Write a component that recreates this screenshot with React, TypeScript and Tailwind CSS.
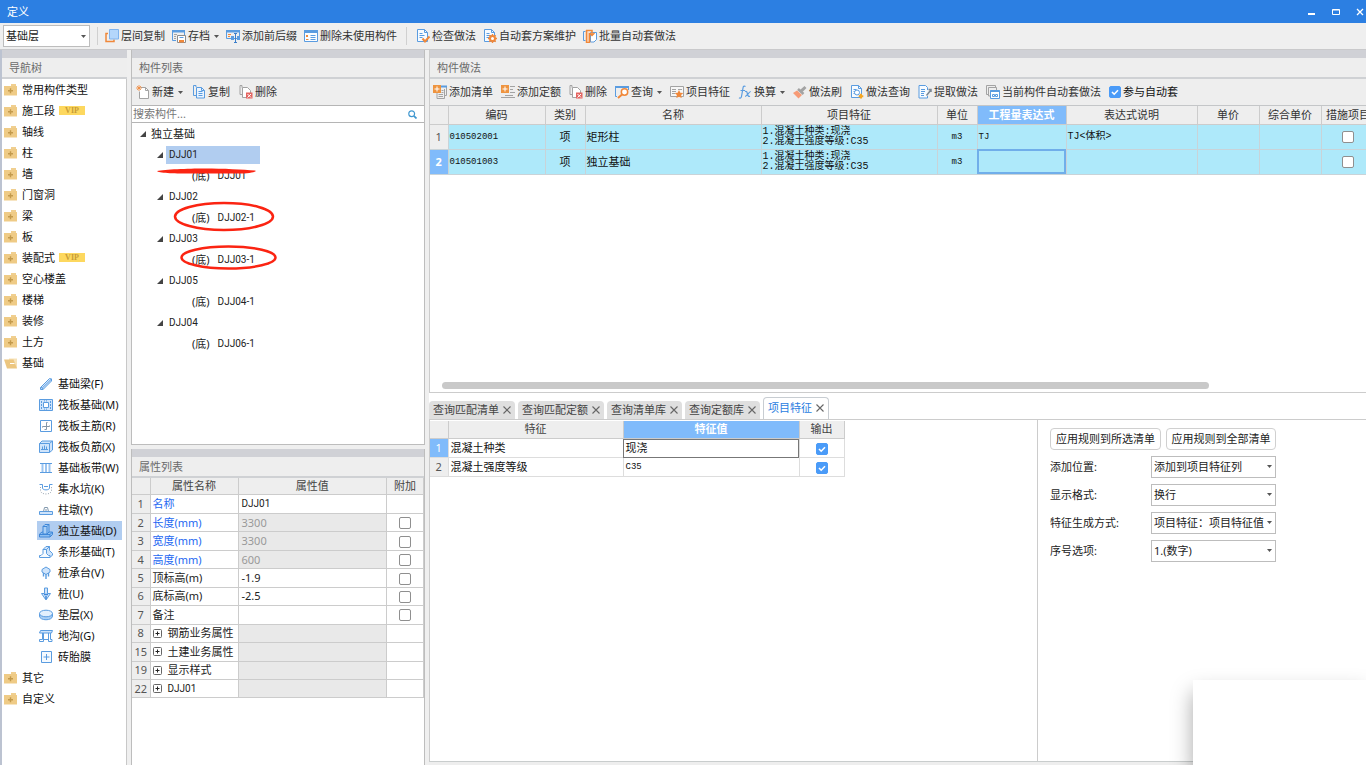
import React from "react";
import clsx from "clsx";

interface NavChild {
  label: string;
  icon: React.ReactNode;
}

interface TreeNode {
  name: string;
  children: string[];
}

interface PropertyRow {
  no: number;
  name: string;
  value?: string;
  blue?: boolean;
  readOnly?: boolean;
  extra?: boolean;
  group?: boolean;
}

const BLUE = "#5a9ce0";
const PALE = "#cfe4fb";
const ORANGE = "#f0883a";
const GRAY = "#a3a3a3";

const Icon = ({
  children,
  size = 14,
}: {
  children: React.ReactNode;
  size?: number;
}) => (
  <svg
    width={size}
    height={size}
    viewBox="0 0 14 14"
    fill="none"
    stroke={BLUE}
    strokeWidth="1"
    className="shrink-0"
    aria-hidden="true"
  >
    {children}
  </svg>
);

const Caret = () => (
  <svg width="5" height="3" viewBox="0 0 5 3" className="shrink-0" aria-hidden="true">
    <path d="M0 0h5L2.500 3z" fill="#555" />
  </svg>
);

/* ---- toolbar icons ---- */

const LayerCopyIcon = () => (
  <Icon>
    <path d="M3 4.500H1v8h8v-2" stroke={ORANGE} strokeWidth="1.500" />
    <path d="M4.500.5h9v9.500h-9z" fill="#b4d6fb" stroke="#7fb3ee" />
  </Icon>
);

const ArchiveIcon = () => (
  <Icon>
    <path d="M4 11.500H.5v-10h12V6" />
    <path d="M0 1h13v2.500H0z" fill={BLUE} stroke="none" />
    <path d="M2 5.500h3M2 7.500h2M2 9.500h2" stroke={GRAY} />
    <path d="M5.500 6.500h8v7h-8z" fill="#fff" stroke="#8c8c8c" />
    <path d="M7 11h5v2.500H7z" fill={ORANGE} stroke="none" />
    <path d="M7.500 8.500h4" />
  </Icon>
);

const PrefixIcon = () => (
  <Icon>
    <path d="M.5 1.500h13v8H.5z" />
    <path d="M0 1h14v2.500H0z" fill={BLUE} stroke="none" />
    <path d="M2 5.500h3M2 7.500h2" stroke={ORANGE} />
    <path d="M5 7h3v4H5zM11 7h3v4h-3z" fill={BLUE} stroke="none" />
    <path d="M9.500 5v8M8 13.500h3M8 4.500h3" stroke="#3c7fcb" />
  </Icon>
);

const UnusedIcon = () => (
  <Icon>
    <path d="M.5 1.500h13v11H.5z" fill="#fbfdff" />
    <path d="M0 1h14v3H0z" fill={BLUE} stroke="none" />
    <path d="M2 6l2 2M4 6L2 8M2 10.500h2.500" stroke={ORANGE} />
    <path d="M6.500 6.500h5M6.500 8.500h5M6.500 10.500h5" />
  </Icon>
);

const Doc = () => (
  <>
    <path d="M1.500.5h7l3 3v9h-10z" fill="#f7fbff" />
    <path d="M8.500.5v3h3M3.500 4.500h3M3.500 6.500h5M3.500 8.500h3" />
  </>
);

const CheckDocIcon = () => (
  <Icon>
    <Doc />
    <path d="M6.500 9.500l2.500 3L13.500 7.500" stroke={ORANGE} strokeWidth="2" />
  </Icon>
);

const GearDocIcon = () => (
  <Icon>
    <Doc />
    <circle cx="9.500" cy="9.500" r="2.500" stroke={ORANGE} strokeWidth="2" fill="#fff" />
    <path
      d="M9.500 5v2M9.500 12v2M5 9.500h2M12 9.500h2M6.300 6.300l1.200 1.200M12.700 6.300l-1.200 1.200M6.300 12.700l1.200-1.200M12.700 12.700l-1.200-1.200"
      stroke={ORANGE}
      strokeWidth="1.400"
    />
  </Icon>
);

const BatchIcon = () => (
  <Icon>
    <path d="M2.500 2.500h-2v9h2" />
    <path d="M7.500 3.500h6v7l-2.500 2.500H7.500z" fill="#fff" />
    <path d="M3.500 1v12.500h3V4" fill="#fbd9c0" stroke={ORANGE} strokeWidth="1.500" />
    <path d="M3 1.500h6v4M6.500 4L9 6.500 11.500 4" stroke={ORANGE} strokeWidth="1.500" />
  </Icon>
);

const NewIcon = () => (
  <Icon>
    <path d="M4.500 2.500h5l3 3v8h-9v-7" fill="#fff" stroke={GRAY} />
    <path d="M9.500 2.500v3h3" stroke={GRAY} />
    <path d="M3 0v6M0 3h6M1 1l4 4M5 1L1 5" stroke={ORANGE} strokeWidth=".8" />
  </Icon>
);

const CopyIcon = () => (
  <Icon>
    <path d="M4 2V.5H1.500v10H4" />
    <path d="M4.500 2.500h5l3 3v7.500h-8z" fill="#eaf4ff" />
    <path d="M9.500 2.500v3h3M6.500 6.500h4M6.500 8.500h4M6.500 10.500h4" />
  </Icon>
);

const DeleteIcon = () => (
  <Icon>
    <path d="M3 2.500V.5H1v9h2" stroke={GRAY} />
    <path d="M3.500 2.500h5l3 3v7h-8z" fill="#fff" stroke={GRAY} />
    <path d="M7 7.500h6.500v6H7z" fill="#e46561" stroke="none" />
    <path d="M8.500 9l3.500 3.500M12 9l-3.500 3.500" stroke="#fff" />
  </Icon>
);

const AddListIcon = () => (
  <Icon>
    <path d="M8 1.500h5.500v9H12M4 8v5.500h7.500V4" stroke={GRAY} />
    <path d="M8 1.500h6" strokeWidth="2" />
    <path d="M8.500 5.500h2M8.500 7.500h2M5.500 9.500h4.500M5.500 11.500h4.500" stroke={GRAY} />
    <path d="M0 0h8v8H0z" fill="#ee9440" stroke="none" />
    <path d="M4 1.500v5M1.500 4h5" stroke="#fff" />
  </Icon>
);

const AddQuotaIcon = () => (
  <Icon>
    <path d="M9 1.500h5M9 4.500h3M9 7.500h5M4 10.500h8M0 12.500h14" stroke={GRAY} />
    <path d="M0 0h8v8H0z" fill="#ee9440" stroke="none" />
    <path d="M4 1.500v5M1.500 4h5" stroke="#fff" />
  </Icon>
);

const QueryIcon = () => (
  <Icon>
    <path d="M2 11.500H.5v-10h13V5" />
    <path d="M0 1h14v2H0z" fill={BLUE} stroke="none" />
    <circle cx="9.500" cy="7" r="3.200" fill="#fff" stroke={ORANGE} strokeWidth="1.500" />
    <path d="M7 9.500L3 13" stroke={ORANGE} strokeWidth="2" />
  </Icon>
);

const FeatureIcon = () => (
  <Icon>
    <path d="M.5 1.500h13v10H.5z" fill="#f7f7f7" stroke={GRAY} />
    <path d="M2 4.500h4M2 6.500h4M2 8.500h3M8 4.500h4" stroke={GRAY} />
    <path
      d="M9 5l1.300 2.700 3 .4-2.200 2 .6 3L9 11.700l-2.700 1.400.6-3-2.200-2 3-.4z"
      fill={ORANGE}
      stroke="none"
    />
  </Icon>
);

const FxIcon = () => (
  <Icon>
    <path d="M7.500 1.500C6 .5 5.200 1.500 5 3L3.500 11.500C3.200 13 2 13.500 1 12.800M2.500 5.500H7" strokeWidth="1.200" />
    <path d="M7 6.500c1.500-.8 2 .5 2.500 2.500s1 3 2.500 2.200M12.800 6.500C11 6.500 9 11.500 7 11.500" strokeWidth="1.200" />
  </Icon>
);

const BrushIcon = () => (
  <Icon>
    <path d="M11.500 1l2 2-4 4-2.500-2z" fill={GRAY} stroke="none" />
    <path d="M5 4l5.500 5" stroke={GRAY} strokeWidth="2.500" />
    <path d="M4 5.500L9 10l-3.500 3.500L0 8z" fill="#f79b76" stroke="none" />
  </Icon>
);

const SearchDocIcon = () => (
  <Icon>
    <Doc />
    <circle cx="7" cy="7.500" r="2.500" fill="#fff" />
    <path d="M8.800 9.500l2 2" />
    <path d="M11 8.800v4.700M8.700 11.200h4.600" stroke="#f5a623" strokeWidth="2" />
  </Icon>
);

const ExtractIcon = () => (
  <Icon>
    <path d="M9.500 11v2H1V.5h6.500l2 2V5" fill="#f7fbff" />
    <path d="M3 4.500h4M3 6.500h4M3 8.500h3M3 10.500h3" />
    <path d="M12.500 5.500L8.500 10.500M10.500 4.500H13V7" stroke="#7d8893" strokeWidth="1.500" />
  </Icon>
);

const CurrentIcon = () => (
  <Icon>
    <path d="M2 9.500H.5V.5h9V2M4 11H2.500V2.500h8V5" stroke={GRAY} />
    <path d="M4.500 5.500h9v8h-9z" fill="#fff" />
    <path d="M4.500 6h9" strokeWidth="2" />
    <path d="M6.500 9.500h2v2h-2zM9.500 9.500h2v2h-2z" />
  </Icon>
);

/* ---- navigation icons ---- */

const FolderIcon = () => (
  <svg width="14" height="12" viewBox="0 0 14 12" className="shrink-0" aria-hidden="true">
    <path d="M7 0h5v2H7z" fill="#f0cf90" />
    <path d="M0 2h13v9.500H0z" fill="#efcb86" />
    <path d="M6.500 4.200v5M4 6.700h5" stroke="#c39a4c" strokeWidth="1.400" />
  </svg>
);

const FolderOpenIcon = () => (
  <svg width="14" height="12" viewBox="0 0 14 12" className="shrink-0" aria-hidden="true">
    <path d="M5 1.500h8V11H5z" fill="#f6e2b8" />
    <path d="M0 2.500h9.500L13 11.500H3z" fill="#ecc680" />
    <path d="M6 6.500h4.500" stroke="#fff" />
  </svg>
);

const folders: { label: string; vip?: boolean }[] = [
  { label: "常用构件类型" },
  { label: "施工段", vip: true },
  { label: "轴线" },
  { label: "柱" },
  { label: "墙" },
  { label: "门窗洞" },
  { label: "梁" },
  { label: "板" },
  { label: "装配式", vip: true },
  { label: "空心楼盖" },
  { label: "楼梯" },
  { label: "装修" },
  { label: "土方" },
];

const foundationItems: NavChild[] = [
  {
    label: "基础梁(F)",
    icon: (
      <>
        <path d="M1.500 10.500L10.500 1.500l2 .5v2L4 12.500H1.500z" fill={PALE} />
        <path d="M1.500 10.500l2 .3.5 1.700M3.500 10.800l9-8.800" />
      </>
    ),
  },
  {
    label: "筏板基础(M)",
    icon: (
      <>
        <path d="M.5 1.500h13v11H.5z" fill={PALE} />
        <path d="M4.500 4.500h5v5h-5z" fill="#fff" />
        <path d="M2.500 3v8M11.500 3v8" strokeDasharray="2 1" />
        <path d="M5 2.900h4M5 11.100h4" strokeDasharray="1 1" />
      </>
    ),
  },
  {
    label: "筏板主筋(R)",
    icon: (
      <>
        <path d="M1.500 1.500h11v11h-11z" />
        <path d="M7.500 3.500v7h-2M3.500 8.500v-1h7v-1M7.500 3.500h1" stroke="#8496a8" />
      </>
    ),
  },
  {
    label: "筏板负筋(X)",
    icon: (
      <>
        <path d="M.5 3.500h10v9H.5zM.5 3.500l2.500-2.500h10.500v9l-3 2.500M10.500 3.500l3-2.500" fill={PALE} />
        <path d="M3.500 10V6.500M5.500 10V5.500M7.500 10V6.500M2 9.500h7" />
      </>
    ),
  },
  {
    label: "基础板带(W)",
    icon: (
      <>
        <path d="M1 2.500h12M1 11.500h12" />
        <path d="M3.500 3v8M7 3v8M10.500 3v8" strokeWidth="2" stroke="#9cc5f1" />
      </>
    ),
  },
  {
    label: "集水坑(K)",
    icon: (
      <>
        <path d="M.5 2.500h3V6c0 2.500 7 2.500 7 0V2.500h3" />
        <path d="M1.500 5v4c1 4 10 4 11 0V5" strokeDasharray="1 1.500" stroke="#99a5b0" />
        <path d="M5 4.500h4" />
      </>
    ),
  },
  {
    label: "柱墩(Y)",
    icon: (
      <>
        <path d="M.5 8.500h13v3H.5z" fill={PALE} />
        <path d="M4.500 8.500l1-4h3l1 4M7 6v2" stroke="#8298ad" />
      </>
    ),
  },
  {
    label: "独立基础(D)",
    icon: (
      <>
        <path d="M.5 10l2.500-2h10.500v2.500l-2.500 2.500H.5z" fill="#8fc0f2" stroke="#3f87d8" />
        <path d="M4 10V2.500L6 .5h4V8l-2 2z" fill="#a9cff6" stroke="#3f87d8" />
        <path d="M4 2.500h4V10M8 2.500L10 .5M.5 10.500h10.500l2.500-2.500M11 10.500V13" stroke="#3f87d8" />
      </>
    ),
  },
  {
    label: "条形基础(T)",
    icon: (
      <>
        <path d="M4 4.500L7 1.500h3.500v4l3 3v1.500l-2.500 2.500" fill={PALE} />
        <path d="M.5 12.500v-2h1.500l2-2v-4h3.500v4l2 2H11v2z" fill="#f5faff" />
        <path d="M7.500 4.500l3-3" />
      </>
    ),
  },
  {
    label: "桩承台(V)",
    icon: (
      <>
        <path d="M4.500 7v3.500M7 8v5M9.500 7v3.500" strokeWidth="1.400" />
        <path d="M3 3.500L7 1l4 2.500V6L7 8.500 3 6z" fill={PALE} />
      </>
    ),
  },
  {
    label: "桩(U)",
    icon: (
      <>
        <path d="M5.500 1h3v5.500h3L7 13 2.500 6.500h3z" fill={PALE} />
        <path d="M5 7.500h4M7 9v3" strokeWidth="1.500" stroke="#3f87d8" />
      </>
    ),
  },
  {
    label: "垫层(X)",
    icon: (
      <>
        <path d="M.5 5.500V8c0 5 13 5 13 0V5.500" fill="#a9cff6" />
        <ellipse cx="7" cy="5.500" rx="6.500" ry="3.300" fill="#e2effd" />
      </>
    ),
  },
  {
    label: "地沟(G)",
    icon: (
      <>
        <path d="M1.500 1.500h12l-1 2.500H.5z" fill={PALE} />
        <path d="M3.500 4v6.500h-3v2h4V4M9.500 4v8.500h3.500v-2h-1.500V4M4.500 10.500h5" />
      </>
    ),
  },
  {
    label: "砖胎膜",
    icon: (
      <>
        <path d="M2.500 1.500h10v11h-10z" fill="#f5faff" />
        <path d="M7.500 4v6M4.500 7h6" />
      </>
    ),
  },
];

const tree: TreeNode[] = [
  { name: "DJJ01", children: ["DJJ01"] },
  { name: "DJJ02", children: ["DJJ02-1"] },
  { name: "DJJ03", children: ["DJJ03-1"] },
  { name: "DJJ05", children: ["DJJ04-1"] },
  { name: "DJJ04", children: ["DJJ06-1"] },
];

const properties: PropertyRow[] = [
  { no: 1, name: "名称", value: "DJJ01", blue: true },
  { no: 2, name: "长度(mm)", value: "3300", blue: true, readOnly: true, extra: true },
  { no: 3, name: "宽度(mm)", value: "3300", blue: true, readOnly: true, extra: true },
  { no: 4, name: "高度(mm)", value: "600", blue: true, readOnly: true, extra: true },
  { no: 5, name: "顶标高(m)", value: "-1.9", extra: true },
  { no: 6, name: "底标高(m)", value: "-2.5", extra: true },
  { no: 7, name: "备注", extra: true },
  { no: 8, name: "钢筋业务属性", group: true, readOnly: true },
  { no: 15, name: "土建业务属性", group: true, readOnly: true },
  { no: 19, name: "显示样式", group: true, readOnly: true },
  { no: 22, name: "DJJ01", group: true, readOnly: true },
];

const methodRows = [
  { code: "010502001", name: "矩形柱", features: ["1.混凝土种类:现浇", "2.混凝土强度等级:C35"], expr: "TJ", note: "TJ<体积>" },
  { code: "010501003", name: "独立基础", features: ["1.混凝土种类:现浇", "2.混凝土强度等级:C35"], expr: "", note: "" },
];

const methodColumns = [
  { title: "编码", width: "w-[97px]" },
  { title: "类别", width: "w-[40px]" },
  { title: "名称", width: "w-[176px]" },
  { title: "项目特征", width: "w-[176px]" },
  { title: "单位", width: "w-[40px]" },
  { title: "工程量表达式", width: "w-[89px]", active: true },
  { title: "表达式说明", width: "w-[131px]" },
  { title: "单价", width: "w-[62px]" },
  { title: "综合单价", width: "w-[62px]" },
  { title: "措施项目", width: "w-[54px]" },
];

const tabs = ["查询匹配清单", "查询匹配定额", "查询清单库", "查询定额库", "项目特征"];

const options = [
  { id: "position", label: "添加位置:", value: "添加到项目特征列" },
  { id: "format", label: "显示格式:", value: "换行" },
  { id: "mode", label: "特征生成方式:", value: "项目特征：项目特征值" },
  { id: "order", label: "序号选项:", value: "1.(数字)" },
];

const ToolButton = ({
  icon,
  label,
  menu,
}: {
  icon: React.ReactNode;
  label: string;
  menu?: boolean;
}) => (
  <button type="button" className="flex shrink-0 items-center gap-0.5 whitespace-nowrap text-[#333]">
    {icon}
    <span>{label}</span>
    {menu && (
      <span className="pl-0.5">
        <Caret />
      </span>
    )}
  </button>
);

const Check = ({
  label,
  id,
  checked = false,
}: {
  label?: string;
  id?: string;
  checked?: boolean;
}) => (
  <span className="inline-grid align-middle">
    <input
      id={id}
      type="checkbox"
      aria-label={label}
      defaultChecked={checked}
      className="peer col-start-1 row-start-1 size-3 appearance-none rounded-[2px] border border-[#8f8f8f] bg-white checked:border-[#4a9bf8] checked:bg-[#4a9bf8]"
    />
    <svg
      viewBox="0 0 12 12"
      className="pointer-events-none invisible col-start-1 row-start-1 size-3 peer-checked:visible"
      fill="none"
      stroke="#fff"
      strokeWidth="1.600"
      aria-hidden="true"
    >
      <path d="M3 6l2.200 2.200L9 4.300" />
    </svg>
  </span>
);

const Dropdown = ({
  id,
  label,
  value,
}: {
  id: string;
  label?: string;
  value: string;
}) => (
  <span className="grid h-[22px] w-full items-center">
    <select
      id={id}
      aria-label={label}
      defaultValue={value}
      className="col-start-1 row-start-1 h-full w-full appearance-none border border-[#bdbdbd] bg-white pl-0.5 pr-2 text-[#222]"
    >
      <option>{value}</option>
    </select>
    <span className="pointer-events-none col-start-1 row-start-1 mr-1 justify-self-end">
      <Caret />
    </span>
  </span>
);

const PanelHeader = ({ title }: { title: string }) => (
  <div className="shrink-0">
    <div className="h-2 bg-[#d0d1d6]" />
    <h2 className="flex h-[21px] items-center border-b-2 border-[#cfd1d4] bg-[#eee] px-[7px] text-[#6b6b6b]">
      {title}
    </h2>
  </div>
);

const Navigator = () => (
  <nav className="flex w-[127px] shrink-0 flex-col border-l-2 border-[#bcc3d1] bg-white">
    <PanelHeader title="导航树" />
    <ul className="min-h-0 flex-1 overflow-hidden border-r border-[#c8c8c8] text-[#111]">
      {folders.map((folder) => (
        <li key={folder.label} className="flex h-[21px] items-center gap-1 pl-0.5">
          <FolderIcon />
          <span>{folder.label}</span>
          {folder.vip && (
            <span className="flex h-[9px] w-[26px] items-center justify-center bg-[#fdd85f] font-['Liberation_Serif',serif] text-[8px] font-bold text-[#c79c38]">
              VIP
            </span>
          )}
        </li>
      ))}
      <li>
        <div className="flex h-[21px] items-center gap-1 pl-0.5">
          <FolderOpenIcon />
          <span>基础</span>
        </div>
        <ul className="pl-[35px]">
          {foundationItems.map((item) => (
            <li key={item.label} className="flex h-[21px] items-center">
              <a
                href="#"
                className={clsx(
                  "flex h-[19px] w-[85px] items-center gap-[5px] whitespace-nowrap pl-0.5",
                  item.label === "独立基础(D)" && "bg-[#b1cdf0]"
                )}
              >
                <Icon>{item.icon}</Icon>
                {item.label}
              </a>
            </li>
          ))}
        </ul>
      </li>
      {["其它", "自定义"].map((label) => (
        <li key={label} className="flex h-[21px] items-center gap-1 pl-0.5">
          <FolderIcon />
          <span>{label}</span>
        </li>
      ))}
    </ul>
  </nav>
);

const Expander = () => (
  <svg width="6" height="6" viewBox="0 0 6 6" className="shrink-0" aria-hidden="true">
    <path d="M6 0v6H0z" fill="#444" />
  </svg>
);

const ComponentList = () => (
  <section className="flex min-h-0 flex-[395] flex-col border border-t-0 border-[#bdbdbd] bg-white">
    <PanelHeader title="构件列表" />
    <div className="flex h-[26px] shrink-0 items-center gap-[9px] bg-[#eee] px-1">
      <ToolButton icon={<NewIcon />} label="新建" menu />
      <ToolButton icon={<CopyIcon />} label="复制" />
      <ToolButton icon={<DeleteIcon />} label="删除" />
    </div>
    <label className="flex h-[18px] shrink-0 items-center border-y border-[#b5b5b5] pl-px pr-[7px]">
      <input
        type="text"
        aria-label="搜索构件"
        placeholder="搜索构件..."
        className="min-w-0 flex-1 outline-none placeholder:text-[#777]"
      />
      <svg width="9" height="9" viewBox="0 0 9 9" fill="none" stroke="#3f97cf" aria-hidden="true">
        <circle cx="3.700" cy="3.700" r="2.900" strokeWidth="1.200" />
        <path d="M5.800 5.800l2.700 2.700" strokeWidth="1.700" />
      </svg>
    </label>
    <div className="relative min-h-0 flex-1 overflow-hidden text-[#222]">
      <div className="flex h-[21px] items-center gap-[5px] pl-2">
        <Expander />
        <span>独立基础</span>
      </div>
      {tree.map((node, index) => (
        <div key={node.name}>
          <div className="flex h-[21px] items-center gap-[3px] pl-[25px]">
            <Expander />
            <span
              className={clsx(
                "flex h-[18px] w-[94px] items-center pl-[3px] font-['Roboto',sans-serif] text-[10px]",
                index === 0 && "bg-[#b1cdf0]"
              )}
            >
              {node.name}
            </span>
          </div>
          {node.children.map((child) => (
            <div key={child} className="flex h-[21px] items-center gap-2 pl-[60px]">
              <span>(底)</span>
              <span className="font-['Roboto',sans-serif] text-[10px]">{child}</span>
            </div>
          ))}
        </div>
      ))}
      {/* hand-drawn marks over the tree */}
      <svg
        width="160"
        height="160"
        viewBox="0 0 160 160"
        fill="none"
        stroke="#fb2412"
        strokeWidth="2.500"
        className="pointer-events-none absolute left-0 top-0"
        aria-hidden="true"
      >
        <path
          d="M25 48c8-1.500 30-2.500 48-2.500s38 1 50 2c3 1-4 3-14 3H56c-14 0-30-.5-31-2.500z"
          fill="#fb2412"
          stroke="none"
        />
        <ellipse cx="92" cy="93.500" rx="49" ry="13.500" />
        <ellipse cx="96.500" cy="134.500" rx="47" ry="11" />
      </svg>
    </div>
  </section>
);

const PropertyList = () => (
  <section className="mt-1 flex min-h-0 flex-[316] flex-col border-x border-[#bdbdbd] bg-white">
    <PanelHeader title="属性列表" />
    <table className="h-[220px] w-full table-fixed border-collapse text-left">
      <thead>
        <tr className="bg-[#eee] text-[#444]">
          <th aria-label="行号" className="w-[18px] border-b border-r border-[#ccc]" />
          <th className="w-[88px] border-b border-r border-[#ccc] text-center font-normal">属性名称</th>
          <th className="border-b border-r border-[#ccc] text-center font-normal">属性值</th>
          <th className="w-[37px] border-b border-r border-[#ccc] text-center font-normal">附加</th>
        </tr>
      </thead>
      <tbody>
        {properties.map((row) => (
          <tr key={row.no}>
            <td className="border-b border-r border-[#ccc] bg-[#eee] text-center leading-4 text-[#555]">
              {row.no}
            </td>
            <td
              className={clsx(
                "whitespace-nowrap border-b border-r border-[#ccc] pl-0.5 leading-4",
                row.blue ? "text-[#2468f2]" : "text-[#222]"
              )}
            >
              <span className="flex items-center gap-1.5">
                {row.group && (
                  <svg width="9" height="9" viewBox="0 0 9 9" fill="none" stroke="#666" aria-hidden="true">
                    <rect x=".5" y=".5" width="8" height="8" rx="1" />
                    <path d="M4.500 2.500v4M2.500 4.500h4" stroke="#222" />
                  </svg>
                )}
                {row.name.startsWith("DJJ") ? (
                  <span className="font-['Roboto',sans-serif] text-[10px]">{row.name}</span>
                ) : (
                  row.name
                )}
              </span>
            </td>
            <td
              className={clsx(
                "border-b border-r border-[#ccc] pl-[3px] leading-4",
                row.readOnly ? "bg-[#e9e9e9] text-[#999]" : "text-[#222]",
                row.no === 1 && "font-['Roboto',sans-serif] text-[10px]"
              )}
            >
              {row.value}
            </td>
            <td className="border-b border-r border-[#ccc] text-center leading-3">
              {row.extra && <Check label={row.name} />}
            </td>
          </tr>
        ))}
      </tbody>
    </table>
  </section>
);

const MethodTable = () => (
  <div className="min-h-0 flex-1 overflow-hidden bg-white">
    <table className="w-[945px] table-fixed border-collapse">
      <thead>
        <tr className="h-[18px] bg-[#eee] text-[#333]">
          <th aria-label="行号" className="w-[18px] border-b border-r border-[#ccc]" />
          {methodColumns.map((column) => (
            <th
              key={column.title}
              className={clsx(
                "whitespace-nowrap border-b border-r border-[#ccc] leading-4",
                column.width,
                column.active ? "bg-[#80bbfb] font-bold text-white" : "font-normal"
              )}
            >
              {column.title}
            </th>
          ))}
        </tr>
      </thead>
      <tbody>
        {methodRows.map((row, index) => (
          <tr
            key={row.code}
            className="h-[25px] bg-[#aee9fa] text-[#111] *:border-b *:border-r *:border-[#c9d3d8]"
          >
            <td
              className={clsx(
                "text-center",
                index === 1 ? "bg-[#80bbfb] font-bold text-white" : "bg-[#eee] text-[#555]"
              )}
            >
              {index + 1}
            </td>
            <td className="pl-px font-['Liberation_Mono','Noto_Sans_CJK_SC',monospace] text-[9px]">{row.code}</td>
            <td className="text-center">项</td>
            <td className="pl-px">{row.name}</td>
            <td className="pl-px pt-px font-['Liberation_Mono','Noto_Sans_CJK_SC',monospace] text-[10px] leading-[10px]">
              {row.features.map((feature) => (
                <div key={feature} className="whitespace-nowrap">
                  {feature}
                </div>
              ))}
            </td>
            <td className="text-center font-['Liberation_Mono',monospace] text-[9px]">m3</td>
            <td
              className={clsx(
                "pl-px font-['Liberation_Mono',monospace] text-[9px]",
                index === 1 && "outline-2 -outline-offset-2 outline-[#70aeea]"
              )}
            >
              {row.expr}
            </td>
            <td className="pl-px font-['Liberation_Mono','Noto_Sans_CJK_SC',monospace] text-[10px]">{row.note}</td>
            <td />
            <td />
            <td className="text-center leading-3">
              <Check label={`措施项目 ${index + 1}`} />
            </td>
          </tr>
        ))}
      </tbody>
    </table>
  </div>
);

const MethodPanel = () => (
  <section className="flex min-h-0 flex-[342] flex-col border-b border-l border-[#ccc] bg-white">
    <PanelHeader title="构件做法" />
    <div className="flex h-[27px] shrink-0 items-center gap-2 overflow-hidden border-b border-[#c4c6c8] bg-[#eee] pl-[3px]">
      <ToolButton icon={<AddListIcon />} label="添加清单" />
      <ToolButton icon={<AddQuotaIcon />} label="添加定额" />
      <ToolButton icon={<DeleteIcon />} label="删除" />
      <ToolButton icon={<QueryIcon />} label="查询" menu />
      <ToolButton icon={<FeatureIcon />} label="项目特征" />
      <ToolButton icon={<FxIcon />} label="换算" menu />
      <ToolButton icon={<BrushIcon />} label="做法刷" />
      <ToolButton icon={<SearchDocIcon />} label="做法查询" />
      <ToolButton icon={<ExtractIcon />} label="提取做法" />
      <ToolButton icon={<CurrentIcon />} label="当前构件自动套做法" />
      <span className="flex shrink-0 items-center gap-0.5">
        <Check id="auto-apply" checked />
        <label htmlFor="auto-apply" className="text-[#111]">
          参与自动套
        </label>
      </span>
    </div>
    <MethodTable />
    <div className="shrink-0 pb-[3px] pl-3">
      <div className="h-[7px] w-[83%] rounded-full bg-[#c9c9c9]" />
    </div>
  </section>
);

const FeatureTable = () => (
  <table className="w-[414px] table-fixed border-collapse text-left">
    <thead>
      <tr className="h-[18px] text-[#444]">
        <th aria-label="行号" className="w-[18px] border-b border-r border-[#ccc] bg-[#eee]" />
        <th className="w-[175px] border-b border-r border-[#ccc] bg-[#eee] text-center font-normal leading-4">特征</th>
        <th className="w-[176px] border-b border-r border-[#ccc] bg-[#80bbfb] text-center font-bold leading-4 text-white">
          特征值
        </th>
        <th className="w-[45px] border-b border-r border-[#ccc] bg-[#eee] text-center font-normal leading-4">输出</th>
      </tr>
    </thead>
    <tbody>
      {[
        ["混凝土种类", "现浇"],
        ["混凝土强度等级", "C35"],
      ].map(([name, value], index) => (
        <tr key={name} className="h-[19px] text-[#111] *:border-b *:border-r *:border-[#ddd]">
          <td
            className={clsx(
              "text-center",
              index === 0 ? "bg-[#80bbfb] text-white" : "bg-[#eee] text-[#555]"
            )}
          >
            {index + 1}
          </td>
          <td className="pl-0.5 leading-4">{name}</td>
          <td
            className={clsx(
              "pl-0.5 leading-4",
              index === 0
                ? "outline -outline-offset-1 outline-[#777]"
                : "font-['Liberation_Mono',monospace] text-[9px]"
            )}
          >
            {value}
          </td>
          <td className="text-center leading-3">
            <Check label={`输出 ${name}`} checked />
          </td>
        </tr>
      ))}
    </tbody>
  </table>
);

const QueryPanel = () => (
  <section className="flex min-h-0 flex-[373] flex-col bg-white">
    <div className="flex h-[27px] shrink-0 items-end gap-[3px] border-b border-[#ccc]">
      {tabs.map((tab) => {
        const active = tab === "项目特征";
        return (
          <button
            key={tab}
            type="button"
            className={clsx(
              "flex items-center gap-1 whitespace-nowrap rounded-t-sm px-1",
              active
                ? "h-[22px] border border-b-0 border-[#c8cdd2] bg-white text-[#2b7de1]"
                : "h-[18px] bg-[#dfdfdf] text-[#444]"
            )}
          >
            {tab}
            <svg width="8" height="8" viewBox="0 0 8 8" stroke="#666" strokeWidth="1.100" aria-hidden="true">
              <path d="M.5.5l7 7M7.500.5l-7 7" />
            </svg>
          </button>
        );
      })}
    </div>
    <div className="flex min-h-0 flex-1 border-b border-[#c9cdcd]">
      <div className="min-w-0 flex-1 overflow-hidden border-x border-[#ccc] pt-px">
        <FeatureTable />
      </div>
      <form className="w-[328px] shrink-0 px-3 pt-2">
        <div className="flex gap-[5px]">
          <button type="button" className="h-[22px] w-[111px] whitespace-nowrap rounded-sm border border-[#d0d0d0] text-[#222]">
            应用规则到所选清单
          </button>
          <button type="button" className="h-[22px] w-[110px] whitespace-nowrap rounded-sm border border-[#d0d0d0] text-[#222]">
            应用规则到全部清单
          </button>
        </div>
        <div className="flex w-[226px] flex-col gap-1.5 pt-1.5">
          {options.map((option) => (
            <div key={option.id} className="flex items-center">
              <label htmlFor={option.id} className="w-[101px] shrink-0 text-[#222]">
                {option.label}
              </label>
              <Dropdown id={option.id} value={option.value} />
            </div>
          ))}
        </div>
      </form>
    </div>
    <div className="h-[3px] shrink-0 bg-[#eee]" />
  </section>
);

const App: React.FC = () => {
  return (
    <div className="relative flex h-screen flex-col overflow-hidden bg-[#efefef] font-['Noto_Sans','Noto_Sans_CJK_SC',sans-serif] text-[11px] leading-4">
      <header className="flex h-[23px] shrink-0 items-center justify-between bg-[#2c7fe2] pl-[7px] text-white">
        <h1>定义</h1>
        <div className="flex items-center gap-4 pr-0.5">
          <button type="button" aria-label="最小化">
            <svg width="9" height="9" viewBox="0 0 9 9" stroke="#fff" strokeWidth="2" aria-hidden="true">
              <path d="M1 7h7" />
            </svg>
          </button>
          <button type="button" aria-label="最大化">
            <svg width="8" height="8" viewBox="0 0 8 8" fill="none" stroke="#fff" aria-hidden="true">
              <path d="M.5 1.500h7v5h-7zM.5 2h7" />
            </svg>
          </button>
          <button type="button" aria-label="关闭">
            <svg width="8" height="8" viewBox="0 0 8 8" stroke="#fff" strokeWidth="1.300" aria-hidden="true">
              <path d="M1 1l6 6M7 1L1 7" />
            </svg>
          </button>
        </div>
      </header>

      <div className="flex h-[27px] shrink-0 items-center gap-[7px] border-b border-[#c9c9cb] pl-[3px]">
        <div className="w-[87px] shrink-0">
          <Dropdown id="floor" label="楼层" value="基础层" />
        </div>
        <div className="h-[18px] w-px bg-[#d0d0d0]" />
        <ToolButton icon={<LayerCopyIcon />} label="层间复制" />
        <ToolButton icon={<ArchiveIcon />} label="存档" menu />
        <ToolButton icon={<PrefixIcon />} label="添加前后缀" />
        <ToolButton icon={<UnusedIcon />} label="删除未使用构件" />
        <div className="mx-0.5 h-[18px] w-px bg-[#d0d0d0]" />
        <ToolButton icon={<CheckDocIcon />} label="检查做法" />
        <ToolButton icon={<GearDocIcon />} label="自动套方案维护" />
        <ToolButton icon={<BatchIcon />} label="批量自动套做法" />
      </div>

      <main className="flex min-h-0 flex-1">
        <Navigator />
        <div className="mx-1 flex w-[294px] shrink-0 flex-col">
          <ComponentList />
          <PropertyList />
        </div>
        <div className="flex min-w-0 flex-1 flex-col">
          <MethodPanel />
          <QueryPanel />
        </div>
      </main>

      {/* blank notification popup */}
      <aside className="absolute bottom-0 right-0 h-[85px] w-[173px] bg-white shadow-[0_12px_20px_rgba(0,0,0,0.35)]" />
    </div>
  );
};

export default App;
